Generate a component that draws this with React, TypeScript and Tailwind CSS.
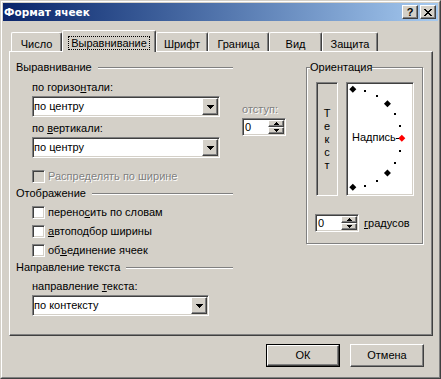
import React from "react"

type Box = { className?: string; children?: React.ReactNode }

// classic 3D borders
function Raised({ className = "", children }: Box) {
  return (
    <div className={`border border-t-white border-l-white border-r-[#404040] border-b-[#404040] bg-[#D4D0C8] shadow-[inset_-1px_-1px_0_#808080] ${className}`}>
      {children}
    </div>
  )
}

function Sunken({ className = "", children }: Box) {
  return (
    <div className={`border border-t-[#808080] border-l-[#808080] border-r-white border-b-white shadow-[inset_1px_1px_0_#404040,inset_-1px_-1px_0_#D4D0C8] p-[1px] ${className}`}>
      {children}
    </div>
  )
}

function ArrowDown() {
  return (
    <svg width="7" height="4" viewBox="0 0 7 4" shapeRendering="crispEdges">
      <path d="M0 0h7v1H0zM1 1h5v1H1zM2 2h3v1H2zM3 3h1v1H3z" fill="#000" />
    </svg>
  )
}

function SmallArrow({ up }: { up?: boolean }) {
  return (
    <svg width="5" height="3" viewBox="0 0 5 3" shapeRendering="crispEdges">
      {up ? (
        <path d="M2 0h1v1H2zM1 1h3v1H1zM0 2h5v1H0z" fill="#000" />
      ) : (
        <path d="M0 0h5v1H0zM1 1h3v1H1zM2 2h1v1H2z" fill="#000" />
      )}
    </svg>
  )
}

function Combo({ value, className = "" }: { value: string; className?: string }) {
  return (
    <Sunken className={`flex h-[21px] bg-white ${className}`}>
      <span className="flex-1 leading-[17px]">{value}</span>
      <Raised className="w-[16px] h-[17px] flex items-center justify-center">
        <ArrowDown />
      </Raised>
    </Sunken>
  )
}

function Spin({ className = "" }: { className?: string }) {
  return (
    <Sunken className={`flex w-[44px] h-[18px] bg-white ${className}`}>
      <span className="flex-1 pl-[1px] leading-[14px]">0</span>
      <div className="flex flex-col w-[16px]">
        <Raised className="h-[7px] flex items-center justify-center">
          <SmallArrow up />
        </Raised>
        <Raised className="h-[7px] flex items-center justify-center">
          <SmallArrow />
        </Raised>
      </div>
    </Sunken>
  )
}

function Section({ title, className = "" }: { title: string; className?: string }) {
  return (
    <div className={`flex items-center h-[13px] w-[217px] ${className}`}>
      <span className="leading-[13px] pr-[6px]">{title}</span>
      <div className="flex-1 h-[2px] border-t border-t-[#808080] border-b border-b-white" />
    </div>
  )
}

function Check({ children, disabled, className = "" }: { children: React.ReactNode; disabled?: boolean; className?: string }) {
  return (
    <div className={`flex items-center h-[13px] ml-[16px] ${className}`}>
      <Sunken className={`w-[13px] h-[13px] ${disabled ? "bg-[#D4D0C8]" : "bg-white"}`} />
      <span className={`ml-[3px] leading-[13px] ${disabled ? "text-[#808080] [text-shadow:1px_1px_0_#fff]" : ""}`}>
        {children}
      </span>
    </div>
  )
}

const tabs: { label: string; w: string; active?: boolean }[] = [
  { label: "Число", w: "w-[51px]" },
  { label: "Выравнивание", w: "w-[94px]", active: true },
  { label: "Шрифт", w: "w-[52px]" },
  { label: "Граница", w: "w-[61px]" },
  { label: "Вид", w: "w-[53px]" },
  { label: "Защита", w: "w-[56px]" },
]

function Semicircle() {
  const cx = 4.8
  const cy = 54.3
  const r = 49
  const pt = (deg: number) => {
    const a = (deg * Math.PI) / 180
    return [cx + r * Math.cos(a), cy - r * Math.sin(a)]
  }
  const big = [90, 45, 0, -45, -90]
  const small = [75, 60, 30, 15, -15, -30, -60, -75]
  return (
    <svg width="64" height="110" viewBox="0 0 64 110" className="absolute inset-0">
      {small.map((d) => {
        const [x, y] = pt(d)
        return <rect key={d} x={Math.round(x) - 1} y={Math.round(y) - 1} width="2" height="2" fill="#000" />
      })}
      {big.map((d) => {
        const [x, y] = pt(d)
        return (
          <polygon
            key={d}
            points={`${x},${y - 3.5} ${x + 3.5},${y} ${x},${y + 3.5} ${x - 3.5},${y}`}
            fill={d === 0 ? "#FF0000" : "#000"}
          />
        )
      })}
      <rect x="48" y="54" width="3" height="1" fill="#000" />
    </svg>
  )
}

export default function App() {
  return (
    <div className="w-[441px] h-[379px] border border-t-[#D4D0C8] border-l-[#D4D0C8] border-r-[#404040] border-b-[#404040] bg-[#D4D0C8] font-['Liberation_Sans',Arial,sans-serif] text-[11px] text-black">
      <div className="h-full flex flex-col border border-t-white border-l-white border-r-[#808080] border-b-[#808080] p-[1px]">
        {/* title bar */}
        <div className="h-[18px] flex items-center pl-[1px] pr-[2px] bg-linear-to-r from-[#0A246A] to-[#A6CAF0]">
          <span className="font-bold text-white leading-[18px] font-['DejaVu_Sans',sans-serif] text-[10.5px]">Формат ячеек</span>
          <Raised className="ml-auto w-[16px] h-[14px] flex items-center justify-center font-bold leading-[12px]">?</Raised>
          <Raised className="ml-[2px] w-[16px] h-[14px] flex items-center justify-center">
            <svg width="8" height="7" viewBox="0 0 8 7" shapeRendering="crispEdges">
              <path d="M0 0h2v1H0zM6 0h2v1H6zM1 1h2v1H1zM5 1h2v1H5zM2 2h4v1H2zM3 3h2v1H3zM2 4h4v1H2zM1 5h2v1H1zM5 5h2v1H5zM0 6h2v1H0zM6 6h2v1H6z" fill="#000" />
            </svg>
          </Raised>
        </div>

        {/* tabs */}
        <div className="flex items-end mt-[9px] ml-[8px] h-[21px]">
          {tabs.map((t) =>
            t.active ? (
              <div
                key={t.label}
                className={`${t.w} h-[22px] -mb-[1px] relative z-10 bg-[#D4D0C8] border-t border-l border-r border-t-white border-l-white border-r-[#404040] rounded-t-[2px] shadow-[inset_-1px_0_0_#808080] flex justify-center pt-[5px]`}
              >
                <span className="h-[14px] px-[2px] leading-[12px] border border-dotted border-black">{t.label}</span>
              </div>
            ) : (
              <div
                key={t.label}
                className={`${t.w} h-[19px] border-t border-l border-r border-t-white border-l-white border-r-[#404040] rounded-t-[2px] shadow-[inset_-1px_0_0_#808080] text-center leading-[22px]`}
              >
                {t.label}
              </div>
            )
          )}
        </div>

        {/* panel */}
        <div className="ml-[6px] w-[424px] h-[285px] flex border border-t-white border-l-white border-r-[#404040] border-b-[#404040] shadow-[inset_-1px_-1px_0_#808080] pl-[6px] pt-[9px]">
          {/* left column */}
          <div className="flex flex-col w-[270px]">
            <Section title="Выравнивание" />
            <div className="flex">
              <div className="flex flex-col ml-[16px]">
                <div className="mt-[7px] h-[13px] leading-[13px]">
                  по горизо<u>н</u>тали:
                </div>
                <Combo value="по центру" className="w-[188px] mt-[2px]" />
                <div className="mt-[5px] h-[13px] leading-[13px]">
                  по <u>в</u>ертикали:
                </div>
                <Combo value="по центру" className="w-[188px] mt-[2px]" />
              </div>
              <div className="flex flex-col ml-[22px]">
                <div className="mt-[29px] h-[13px] leading-[13px] text-[#808080] [text-shadow:1px_1px_0_#fff]">отступ:</div>
                <Spin className="mt-[2px]" />
              </div>
            </div>
            <Check disabled className="mt-[12px]">
              Распределять по ширине
            </Check>
            <Section title="Отображение" className="mt-[4px]" />
            <Check className="mt-[6px]">
              перено<u>с</u>ить по словам
            </Check>
            <Check className="mt-[6px]">
              <u>а</u>втоподбор ширины
            </Check>
            <Check className="mt-[6px]">
              об<u>ъ</u>единение ячеек
            </Check>
            <Section title="Направление текста" className="mt-[4px]" />
            <div className="ml-[16px] mt-[6px] h-[13px] leading-[13px]">
              направление <u>т</u>екста:
            </div>
            <Combo value="по контексту" className="ml-[16px] w-[177px] mt-[2px]" />
          </div>

          {/* orientation group */}
          <div className="ml-[20px] mt-[6px] w-[117px] h-[177px] flex flex-col border border-[#808080] shadow-[inset_1px_1px_0_#fff,1px_1px_0_#fff]">
            <div className="-mt-[7px] ml-[3px] w-fit h-[13px] leading-[13px] bg-[#D4D0C8]">Ориентация</div>
            <div className="flex mt-[8px] ml-[9px]">
              <Sunken className="w-[22px] h-[114px] p-0 flex flex-col items-center justify-center">
                {["Т", "е", "к", "с", "т"].map((c, i) => (
                  <span key={i} className="leading-[13px]">
                    {c}
                  </span>
                ))}
              </Sunken>
              <Sunken className="ml-[8px] w-[68px] h-[114px] bg-white">
                <div className="relative w-[64px] h-[110px]">
                  <Semicircle />
                  <span className="absolute left-[4px] top-[47px] leading-[13px]">Надпись</span>
                </div>
              </Sunken>
            </div>
            <div className="flex items-center mt-[18px] ml-[8px]">
              <Spin />
              <span className="ml-[5px] leading-[13px]">
                <u>г</u>радусов
              </span>
            </div>
          </div>
        </div>

        {/* buttons */}
        <div className="flex justify-end mt-[8px] pr-[14px] gap-[10px]">
          <div className="w-[74px] h-[23px] border border-black">
            <Raised className="h-full flex items-center justify-center">ОК</Raised>
          </div>
          <Raised className="w-[74px] h-[23px] flex items-center justify-center">Отмена</Raised>
        </div>
      </div>
    </div>
  )
}
